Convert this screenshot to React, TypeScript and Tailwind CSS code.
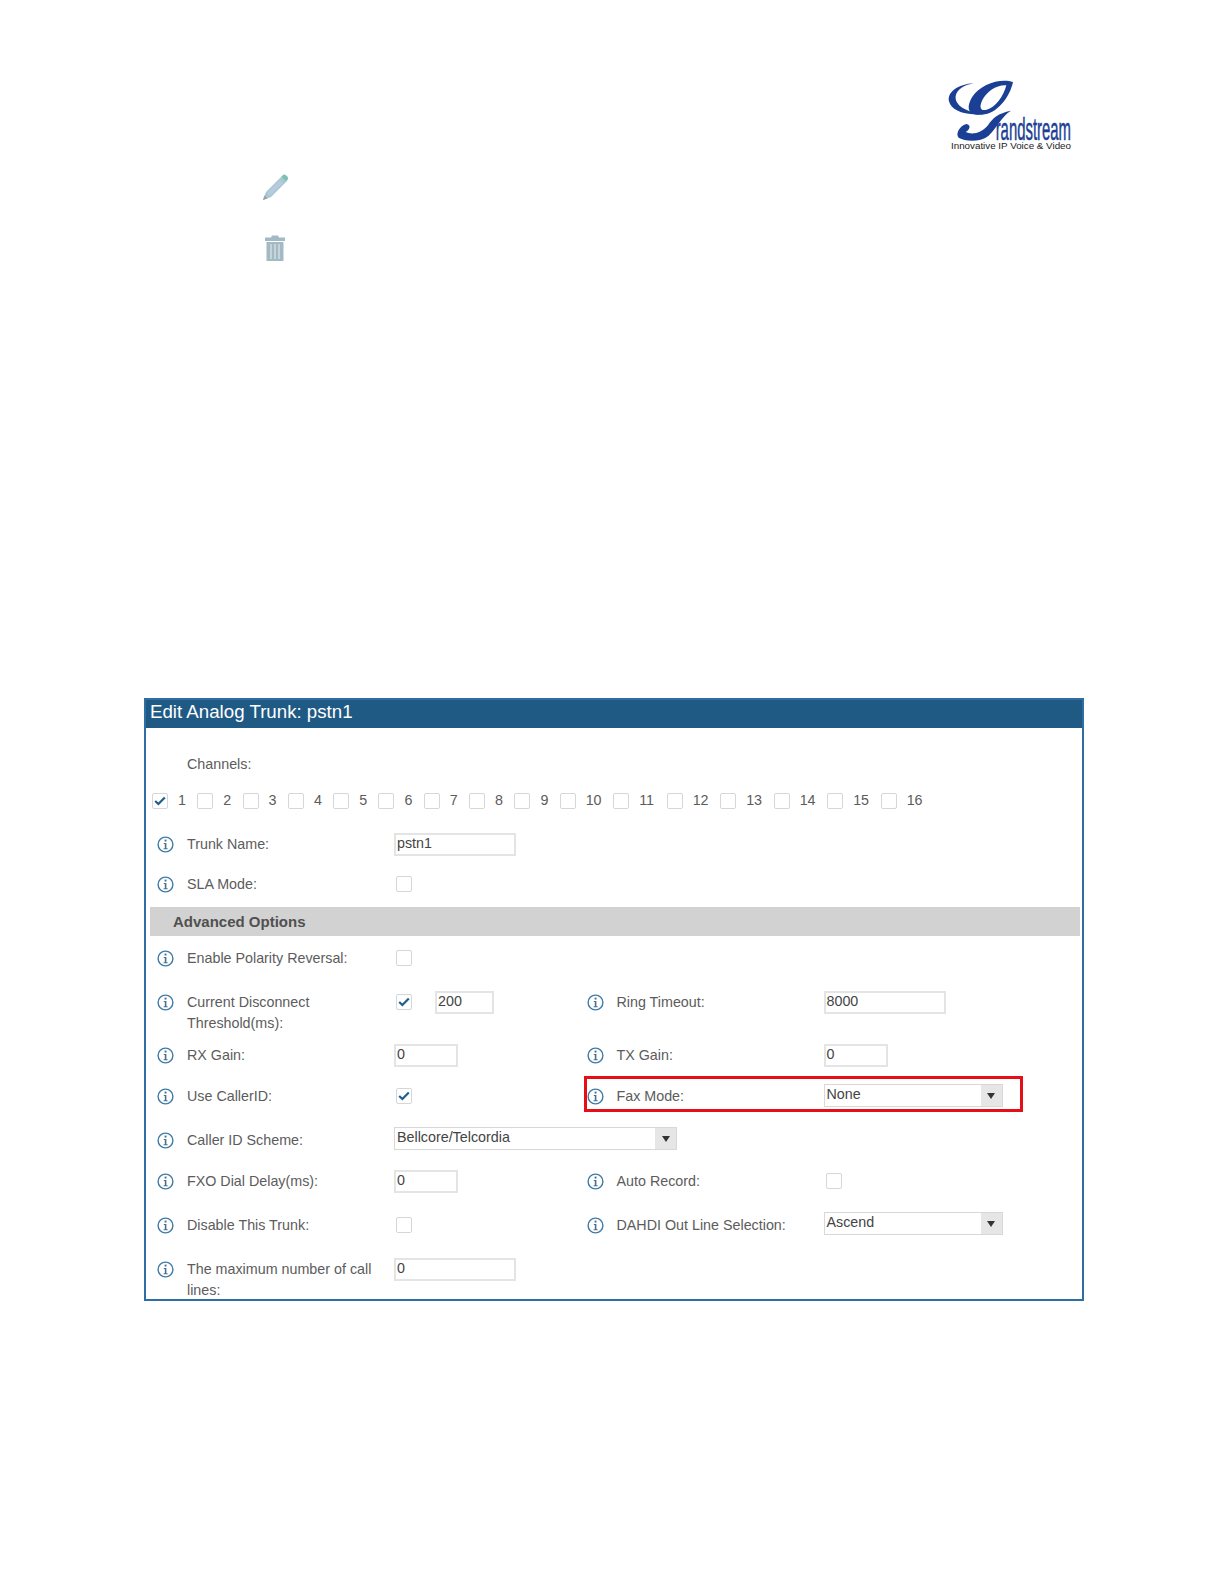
import type { ReactNode } from "react";

const channels = Array.from({ length: 16 }, (_, i) => i + 1);

function InfoIcon() {
  return (
    <svg width="17" height="17" viewBox="0 0 17 17" className="shrink-0">
      <circle cx="8.5" cy="8.5" r="7.4" fill="none" stroke="#3f7ba6" strokeWidth="1.4" />
      <rect x="7.6" y="3.6" width="1.9" height="1.9" fill="#3f6f94" />
      <path d="M6.8 7h2.6v5.2h1.2v1H6.6v-1h1.2V8H6.8z" fill="#4a6f8c" />
    </svg>
  );
}

function CheckBox({ checked = false }: { checked?: boolean }) {
  return (
    <span className="flex h-[16px] w-[16px] shrink-0 items-center justify-center rounded-[2px] border border-[#d6d6d6] bg-white">
      {checked && (
        <svg width="12" height="10" viewBox="0 0 12 10">
          <path d="M1.2 5 L4.4 8 L10.8 1.4" fill="none" stroke="#1f5f8f" strokeWidth="2.2" />
        </svg>
      )}
    </span>
  );
}

function TextBox({ value, width }: { value: string; width: string }) {
  return (
    <div className={`flex h-[23px] items-center border-2 border-[#e4e4e4] pb-[2px] pl-[1px] text-[14.3px] text-[#444] ${width}`}>
      {value}
    </div>
  );
}

function SelectBox({ value, width }: { value: string; width: string }) {
  return (
    <div className={`flex h-[23px] items-center justify-between border border-[#d8d8d8] text-[14.3px] text-[#444] ${width}`}>
      <span className="pb-[2px] pl-[2px]">{value}</span>
      <span className="flex h-full w-[21px] items-center justify-center bg-[#e6e6e6]">
        <span className="h-0 w-0 border-x-[4px] border-t-[6px] border-x-transparent border-t-[#333]" />
      </span>
    </div>
  );
}

function Field({ label, children, wide }: { label: ReactNode; children?: ReactNode; wide?: boolean }) {
  return (
    <div className={`flex items-start ${wide ? "w-[429.5px]" : ""}`}>
      <div className="flex h-[22px] w-[30px] shrink-0 items-center">
        <InfoIcon />
      </div>
      <div className="w-[207px] shrink-0 pt-[1px] text-[14.3px] leading-[21px] text-[#5c5c5c]">{label}</div>
      <div>{children}</div>
    </div>
  );
}

function Logo() {
  return (
    <svg width="127" height="74" viewBox="80 58 381 222">
      <g fill="#1b3f95">
        <path d="M161 68 C112 70 80 96 86 122 C92 148 130 166 190 160 C142 156 102 136 106 106 C110 86 134 72 161 68 Z" />
        <path
          fillRule="evenodd"
          d="M278 64 C240 52 180 70 155 110 C135 145 145 165 185 162 C230 160 268 110 278 64 Z M258 74 C228 72 200 92 186 118 C176 140 180 150 196 148 C226 142 250 106 258 74 Z"
        />
        <path d="M272 150 C244 166 228 204 204 226 C178 246 134 242 116 232 C104 222 116 196 138 190 C152 192 150 206 136 214 C156 224 186 216 204 192 C218 172 232 158 272 150 Z" />
      </g>
      <text x="226" y="238" fontFamily="'Liberation Sans', sans-serif" fontSize="92" fill="#1b3f95" stroke="#1b3f95" strokeWidth="1.5" textLength="226" lengthAdjust="spacingAndGlyphs">
        randstream
      </text>
      <text x="92" y="266" fontFamily="'Liberation Sans', sans-serif" fontSize="25" fill="#222" textLength="360" lengthAdjust="spacingAndGlyphs">
        Innovative IP Voice &amp; Video
      </text>
    </svg>
  );
}

function PencilIcon() {
  return (
    <svg width="28" height="28" viewBox="0 0 28 28">
      <path d="M2 27 L5 19 L20 4 L25 9 L10 24 Z" fill="#a9c6cf" />
      <path d="M6 20 L19 7 L22 10 L9 23 Z" fill="#b4cbe0" />
      <path d="M20 4 L22.5 1.5 Q24 1 26 3 Q27.5 5 27 6 L25 9 Z" fill="#7fc0b4" />
      <path d="M2 27 L3.4 22.5 L6.5 25.5 Z" fill="#8fa3a8" />
    </svg>
  );
}

function TrashIcon() {
  return (
    <svg width="22" height="26" viewBox="0 0 22 26">
      <path d="M8 0.5 H14 L15 2.5 H21 V6 H1 V2.5 H7 Z" fill="#a3bac4" />
      <path d="M2.5 7 H19.5 V26 H2.5 Z" fill="#a3bac4" />
      <path d="M7 9 V24 M11 9 V24 M15 9 V24" stroke="#d9e4e8" strokeWidth="1.3" />
    </svg>
  );
}

export default function App() {
  return (
    <div className="min-h-[1584px] bg-white font-['Liberation_Sans',Arial,sans-serif]">
      <div className="flex justify-end pr-[150px] pt-[80px]">
        <Logo />
      </div>

      <div className="pl-[261px] pt-[19px]">
        <PencilIcon />
      </div>
      <div className="pl-[264px] pt-[34px]">
        <TrashIcon />
      </div>

      {/* Edit dialog */}
      <div className="ml-[144px] mt-[437px] h-[603px] w-[940px] border-2 border-[#2f6ea3]">
        <div className="flex h-[28px] items-center bg-[#1f5a85] pb-[3px] pl-[4px] text-[18.7px] text-white">
          Edit Analog Trunk: pstn1
        </div>

        <div className="pl-[41px] pt-[26px] text-[14.3px] leading-[21px] text-[#5c5c5c]">Channels:</div>

        <div className="mt-[15px] flex pl-[6px]">
          {channels.map(n => (
            <div key={n} className={`flex items-center ${n < 10 ? "w-[45.3px]" : "w-[53.5px]"}`}>
              <CheckBox checked={n === 1} />
              <span className="ml-[10px] text-[14.3px] text-[#5c5c5c]">{n}</span>
            </div>
          ))}
        </div>

        <div className="mt-[22px] pl-[11px]">
          <Field label="Trunk Name:">
            <TextBox value="pstn1" width="w-[122px]" />
          </Field>
        </div>

        <div className="mt-[17px] pl-[11px]">
          <Field label="SLA Mode:">
            <div className="pl-[2px] pt-[3px]"><CheckBox /></div>
          </Field>
        </div>

        <div className="ml-[4px] mr-[2px] mt-[12px] flex h-[29px] items-center bg-[#d2d2d2] pl-[23px] text-[15px] font-bold text-[#505050]">
          Advanced Options
        </div>

        <div className="mt-[11px] pl-[11px]">
          <Field label="Enable Polarity Reversal:">
            <div className="pl-[2px] pt-[3px]"><CheckBox /></div>
          </Field>
        </div>

        <div className="mt-[22px] flex pl-[11px]">
          <Field wide label={<>Current Disconnect<br />Threshold(ms):</>}>
            <div className="flex items-start pl-[2px] pt-[3px]">
              <CheckBox checked />
              <div className="-mt-[3px] ml-[23px]"><TextBox value="200" width="w-[59px]" /></div>
            </div>
          </Field>
          <Field label="Ring Timeout:">
            <TextBox value="8000" width="w-[122px]" />
          </Field>
        </div>

        <div className="mt-[10px] flex pl-[11px]">
          <Field wide label="RX Gain:">
            <TextBox value="0" width="w-[64px]" />
          </Field>
          <Field label="TX Gain:">
            <TextBox value="0" width="w-[64px]" />
          </Field>
        </div>

        <div className="relative mt-[18px] flex pl-[11px]">
          <Field wide label="Use CallerID:">
            <div className="pl-[2px] pt-[3px]"><CheckBox checked /></div>
          </Field>
          <Field label="Fax Mode:">
            <div className="-mt-[1px]"><SelectBox value="None" width="w-[179px]" /></div>
          </Field>
          <div className="absolute left-[438px] top-[-9px] h-[36px] w-[439px] border-[3px] border-[#e60f17]" />
        </div>

        <div className="mt-[22px] pl-[11px]">
          <Field label="Caller ID Scheme:">
            <div className="-mt-[2px]"><SelectBox value="Bellcore/Telcordia" width="w-[283px]" /></div>
          </Field>
        </div>

        <div className="mt-[19px] flex pl-[11px]">
          <Field wide label="FXO Dial Delay(ms):">
            <TextBox value="0" width="w-[64px]" />
          </Field>
          <Field label="Auto Record:">
            <div className="pl-[2px] pt-[3px]"><CheckBox /></div>
          </Field>
        </div>

        <div className="mt-[21px] flex pl-[11px]">
          <Field wide label="Disable This Trunk:">
            <div className="pl-[2px] pt-[3px]"><CheckBox /></div>
          </Field>
          <Field label="DAHDI Out Line Selection:">
            <div className="-mt-[2px]"><SelectBox value="Ascend" width="w-[179px]" /></div>
          </Field>
        </div>

        <div className="mt-[22px] pl-[11px]">
          <Field label={<>The maximum number of call<br />lines:</>}>
            <TextBox value="0" width="w-[122px]" />
          </Field>
        </div>
      </div>
    </div>
  );
}
